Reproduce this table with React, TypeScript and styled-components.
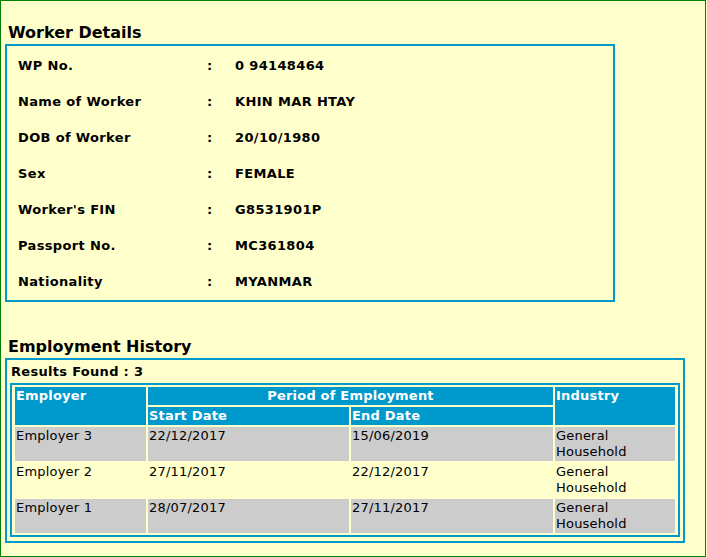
import React from "react";
import styled, { createGlobalStyle } from "styled-components";

const GlobalStyle = createGlobalStyle`
  html, body { margin: 0; padding: 0; background: #ffffcc; }
  body { font-family: "DejaVu Sans", Verdana, sans-serif; font-size: 13px; color: #000; }
`;

const Page = styled.div`
  box-sizing: border-box;
  width: 706px;
  height: 557px;
  border: 1px solid #008000;
  background: #ffffcc;
  padding: 0 4px;
`;

const Heading = styled.h2<{ $top: number }>`
  margin: ${(p) => p.$top}px 0 2px 3px;
  font-size: 16px;
  line-height: 19px;
  font-weight: bold;
  color: #000;
`;

const DetailBox = styled.div`
  box-sizing: border-box;
  width: 610px;
  height: 258px;
  border: 2px solid #0099cc;
  padding: 2px 0 0 11px;
  display: grid;
  grid-template-columns: 189px 28px 1fr;
  grid-auto-rows: 36px;
  align-items: center;
  font-weight: bold;
  line-height: 16px;
  letter-spacing: 0.35px;
`;

const Cell = styled.div``;

const HistoryBox = styled.div`
  box-sizing: border-box;
  width: 680px;
  border: 2px solid #0099cc;
  padding: 0 3px 4px 3px;
`;

const Results = styled.div`
  margin: 4px 0 3px 1px;
  font-weight: bold;
  line-height: 16px;
  letter-spacing: 0.3px;
`;

const Table = styled.div`
  box-sizing: border-box;
  width: 670px;
  border: 2px solid #0099cc;
  padding: 2px 3px;
  display: grid;
  grid-template-columns: 131px 201px 202px 120px;
  grid-template-rows: 18px 18px repeat(3, 34px);
  gap: 2px;
  line-height: 16px;
`;

const Th = styled.div<{ $col: string; $row: string; $center?: boolean }>`
  grid-column: ${(p) => p.$col};
  grid-row: ${(p) => p.$row};
  background: #0099cc;
  color: #fff;
  font-weight: bold;
  padding: 1px;
  letter-spacing: 0.2px;
  text-align: ${(p) => (p.$center ? "center" : "left")};
`;

const Td = styled.div<{ $shade: boolean }>`
  background: ${(p) => (p.$shade ? "#cccccc" : "#ffffcc")};
  padding: 1px;
  color: #000;
  letter-spacing: 0.2px;
`;

const details: [string, string][] = [
  ["WP No.", "0 94148464"],
  ["Name of Worker", "KHIN MAR HTAY"],
  ["DOB of Worker", "20/10/1980"],
  ["Sex", "FEMALE"],
  ["Worker's FIN", "G8531901P"],
  ["Passport No.", "MC361804"],
  ["Nationality", "MYANMAR"],
];

const history = [
  ["Employer 3", "22/12/2017", "15/06/2019", "General Household"],
  ["Employer 2", "27/11/2017", "22/12/2017", "General Household"],
  ["Employer 1", "28/07/2017", "27/11/2017", "General Household"],
];

export default function App() {
  return (
    <>
      <GlobalStyle />
      <Page>
        <Heading $top={22}>Worker Details</Heading>
        <DetailBox>
          {details.map(([k, v]) => (
            <React.Fragment key={k}>
              <Cell>{k}</Cell>
              <Cell>:</Cell>
              <Cell>{v}</Cell>
            </React.Fragment>
          ))}
        </DetailBox>
        <Heading $top={35}>Employment History</Heading>
        <HistoryBox>
          <Results>Results Found : 3</Results>
          <Table>
            <Th $col="1" $row="1 / span 2">Employer</Th>
            <Th $col="2 / span 2" $row="1" $center>
              Period of Employment
            </Th>
            <Th $col="4" $row="1 / span 2">Industry</Th>
            <Th $col="2" $row="2">Start Date</Th>
            <Th $col="3" $row="2">End Date</Th>
            {history.map((r, i) =>
              r.map((c, j) => (
                <Td key={`${i}-${j}`} $shade={i % 2 === 0}>
                  {c}
                </Td>
              ))
            )}
          </Table>
        </HistoryBox>
      </Page>
    </>
  );
}
